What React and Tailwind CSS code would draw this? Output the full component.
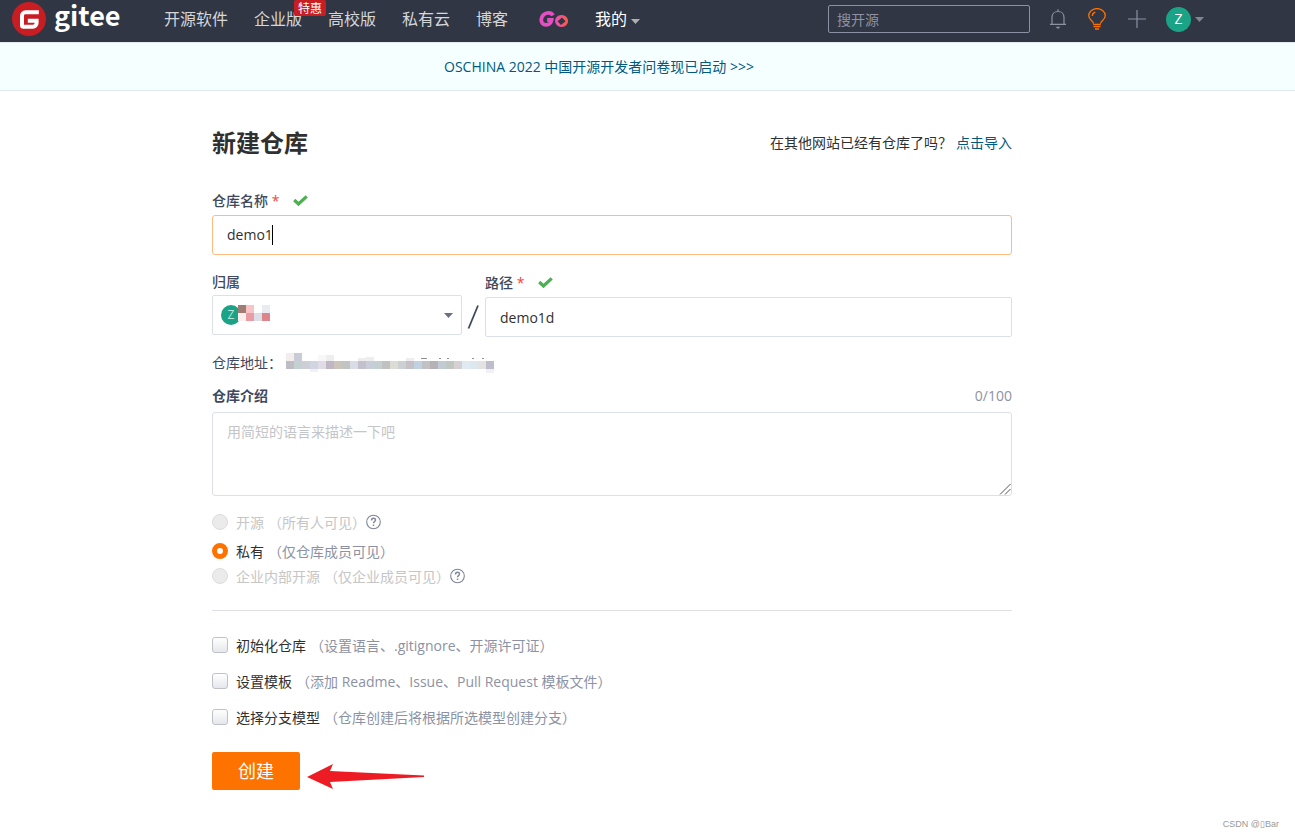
import React, { useState } from 'react';

const navItems = ['开源软件', '企业版', '高校版', '私有云', '博客'];

const ownerBlocks = [
    ['#a17c74', '#f9c4c6', '#ffffff', '#e8ecf0'],
    ['#fdeeee', '#e99ca2', '#dcdfe8', '#de858b']
];

const addressTop = [
    '#f3eded', '#c9ccd6', '#ffffff', '#ffffff', '#f8f6f8', '#eeeeef'
];

const addressMiddle = [
    '#bfbcc4', '#c5d0d1', '#ccd0d6', '#d0d5e1', '#e0dce5', '#c0b6c4', '#cbc4bb',
    '#c0c4c2', '#d9dce6', '#c2c1cc', '#c9ccd9', '#c2d0d1', '#c2c1c2', '#dcdcd4',
    '#ccd0d3', '#c4c1c7', '#c1d1e2', '#c2c1c2', '#b4b2b4', '#c2cbd3', '#c0c6c2',
    '#d5d0d1', '#e1e9f3', '#dce8ef', '#e5e2e3', '#bfbccb'
];

const visibilities = [
    { value: 'public', label: '开源', hint: '（所有人可见）', disabled: true, help: true },
    { value: 'private', label: '私有', hint: '（仅仓库成员可见）', disabled: false, help: false },
    { value: 'inner', label: '企业内部开源', hint: '（仅企业成员可见）', disabled: true, help: true }
];

const options = [
    { id: 'init', label: '初始化仓库', hint: '（设置语言、.gitignore、开源许可证）' },
    { id: 'template', label: '设置模板', hint: '（添加 Readme、Issue、Pull Request 模板文件）' },
    { id: 'branch', label: '选择分支模型', hint: '（仓库创建后将根据所选模型创建分支）' }
];

const Caret = ({ className }) => (
    <svg className={`h-[5px] w-[9px] shrink-0 ${className}`} viewBox="0 0 9 5" fill="currentColor">
        <path d="M0 0h9L4.5 5z" />
    </svg>
);

const CheckMark = () => (
    <svg className="h-[11px] w-[15px]" viewBox="0 0 15 11" fill="none" stroke="#4caf50" strokeWidth="3.2">
        <path d="M1.2 5l4.3 4L13.7 1.3" />
    </svg>
);

const HelpIcon = () => (
    <svg className="h-4 w-4" viewBox="0 0 16 16" fill="none" stroke="#7f869b" strokeWidth="1.1">
        <circle cx="7.500" cy="8" r="6.8" />
        <path d="M5.500 6.400C5.500 4.900 6.300 4.200 7.500 4.200s2 .8 2 1.900c0 1.500-2 1.600-2 3.200" strokeWidth="1.4" />
        <path d="M7.500 10.600v1.400" strokeWidth="1.5" />
    </svg>
);

const Header = () => (
    <header className="flex h-[42px] items-center bg-[#303643] pb-1 pl-3">
        <a href="#home" aria-label="gitee" className="flex w-[152px] shrink-0 items-center gap-2">
            <svg className="h-[34px] w-[34px]" viewBox="0 0 34 34">
                <circle cx="17" cy="17" r="17" fill="#c71d23" />
                <path
                    d="M26.8 10.3H13.4a3.4 3.4 0 0 0-3.4 3.4v9.6c0 1 .5 1.5 1.5 1.5h9.3a3.8 3.8 0 0 0 3.8-3.8v-2.2H15.8"
                    fill="none"
                    stroke="#fff"
                    strokeWidth="4"
                />
            </svg>
            <span className="pb-2 font-['Noto_Sans_CJK_SC',sans-serif] text-[27px] leading-10 font-bold text-white">gitee</span>
        </a>

        <nav className="flex items-center gap-[26px] text-base leading-6 whitespace-nowrap text-[#d6d7da]">
            {navItems.map((item) => (
                <a key={item} href="#nav" className="relative">
                    {item}
                    {item === '企业版' && (
                        <span className="absolute -top-[7px] left-10 rounded-xs bg-[#c71d23] px-1 pt-px text-xs leading-[15px] text-white">
                            特惠
                        </span>
                    )}
                </a>
            ))}
            <a href="#go" aria-label="Go" className="pl-[5px]">
                <svg className="h-4 w-[30px]" viewBox="0 0 30 16">
                    <defs>
                        <linearGradient id="go" x1="0" x2="1">
                            <stop offset="0" stopColor="#e64fc4" />
                            <stop offset="1" stopColor="#fb5c3c" />
                        </linearGradient>
                    </defs>
                    <path
                        d="M14 4.400C13 2.600 11.400 1.900 9.400 1.900 5.400 1.900 2.400 5 2.200 8.800c0 3 1.800 5 4.800 5 3.400 0 5-1.600 5.600-4.800H8.200"
                        fill="none"
                        stroke="#e64fc4"
                        strokeWidth="3.8"
                    />
                    <path d="M22.500 4a6.500 6 0 1 0 .1 0zM23 6.600l3.600 3.600L22 14l-3.400-3.800z" fill="url(#go)" fillRule="evenodd" />
                </svg>
            </a>
            <a href="#mine" className="flex items-center gap-1 text-white">
                我的
                <Caret className="mt-1 text-[#adafb4]" />
            </a>
        </nav>

        <div className="mr-[91px] ml-auto flex items-center">
            <input
                type="search"
                aria-label="搜开源"
                placeholder="搜开源"
                className="mr-5 h-7 w-[202px] rounded-xs border border-[#8c92a4] px-2 text-sm placeholder:text-[#8c92a4]"
            />
            <button aria-label="通知" className="mr-[22px] text-[#8c92a4]">
                <svg className="h-5 w-4" viewBox="0 0 16 20" fill="none" stroke="currentColor" strokeWidth="1.2">
                    <path d="M0 15.400h16M2 15V8.500C2 4.800 4.500 2.500 8 2.500s6 2.300 6 6V15M8 .3v2" />
                    <path d="M5.500 17.800h5L8 20z" fill="currentColor" stroke="none" />
                </svg>
            </button>
            <button aria-label="建议" className="mr-[22px] text-[#fe7300]">
                <svg className="h-[22px] w-[18px]" viewBox="0 0 18 22" fill="none" stroke="currentColor" strokeWidth="1.3">
                    <path d="M5.500 15.800c0-3-4.800-4-4.800-8.200a8.300 7 0 0 1 16.600 0c0 4.200-4.800 5.200-4.800 8.200" />
                    <path d="M4.300 8c0-2 1.200-3.300 3-3.800M5.200 16.500h7.600M5.500 18.700h7M7 21h4" />
                </svg>
            </button>
            <button aria-label="新建" className="mr-5 text-[#8c92a4]">
                <svg className="h-[18px] w-[18px]" viewBox="0 0 18 18" stroke="currentColor" strokeWidth="1.2">
                    <path d="M0 9h18M9 0v18" />
                </svg>
            </button>
            <button aria-label="账号" className="flex items-center gap-1">
                <span className="flex h-[25px] w-[25px] items-center justify-center rounded-full bg-[#1aa386] text-sm text-white">
                    Z
                </span>
                <Caret className="text-[#7f8594]" />
            </button>
        </div>
    </header>
);

const App = () => {
    const [name, setName] = useState('demo1');
    const [path, setPath] = useState('demo1d');
    const [intro, setIntro] = useState('');
    const [visibility, setVisibility] = useState('private');

    return (
        <div className="bg-white font-['Open_Sans','Noto_Sans_CJK_SC',sans-serif] text-sm leading-5 text-[#40485b]">
            <Header />

            {/* Announcement */}
            <div className="flex h-[49px] items-center justify-center border-y border-[#e3e9ed] bg-[#f6ffff] pr-[97px]">
                <a href="#survey" className="text-[#005980]">
                    OSCHINA 2022 中国开源开发者问卷现已启动 &gt;&gt;&gt;
                </a>
            </div>

            <div className="pr-[71px]">
                <main className="mx-auto max-w-[800px] pt-9">
                    <div className="flex items-center justify-between">
                        <h1 className="text-2xl leading-8 font-bold text-[#303030]">新建仓库</h1>
                        <p className="text-[#303030]">
                            在其他网站已经有仓库了吗？
                            <a href="#import" className="ml-1 text-[#005980]">点击导入</a>
                        </p>
                    </div>

                    <form onSubmit={(e) => e.preventDefault()} className="pt-8">
                        {/* Name */}
                        <div className="flex items-center">
                            <label htmlFor="name" className="font-medium">
                                仓库名称 <span className="text-[#f44336]">*</span>
                            </label>
                            <span className="ml-[14px] pb-[2px]"><CheckMark /></span>
                        </div>
                        <div className="mt-1 flex h-10 items-center rounded-[3px] border border-[#ffbb7f] px-[14px]">
                            <input
                                id="name"
                                value={name}
                                onChange={(e) => setName(e.target.value)}
                                className="field-sizing-content text-[#303030] caret-transparent outline-none"
                            />
                            <span className="-ml-px h-5 w-px bg-black"></span>
                        </div>

                        {/* Owner and path */}
                        <div className="mt-4 flex items-start">
                            <div className="w-[250px]">
                                <label htmlFor="owner" className="block pt-px font-medium">归属</label>
                                <div className="relative mt-[3px] flex h-10 items-center justify-between rounded-xs border border-[#dce0e8] px-2">
                                    <div className="flex items-start">
                                        <span className="flex h-5 w-5 items-center justify-center rounded-full bg-[#1aa386] text-xs text-[#b7e3da]">
                                            Z
                                        </span>
                                        <svg className="-ml-[3px] h-4 w-8" viewBox="0 0 4 2" shapeRendering="crispEdges">
                                            {ownerBlocks.map((row, y) =>
                                                row.map((fill, x) => (
                                                    <rect key={`${x}-${y}`} x={x} y={y} width="1" height="1" fill={fill} />
                                                ))
                                            )}
                                        </svg>
                                    </div>
                                    <Caret className="text-[#6b7182]" />
                                    <select id="owner" className="absolute inset-0 appearance-none opacity-0">
                                        <option value="z">Z</option>
                                    </select>
                                </div>
                            </div>
                            <svg className="mt-[34px] h-6 w-[23px]" viewBox="0 0 23 24" stroke="#40485b" strokeWidth="1.8">
                                <path d="M6.500 23.500L16 .5" />
                            </svg>
                            <div className="flex-1 pt-[2px]">
                                <div className="flex items-center">
                                    <label htmlFor="path" className="font-medium">
                                        路径 <span className="text-[#f44336]">*</span>
                                    </label>
                                    <span className="ml-[14px] pb-[2px]"><CheckMark /></span>
                                </div>
                                <input
                                    id="path"
                                    value={path}
                                    onChange={(e) => setPath(e.target.value)}
                                    className="mt-1 block h-10 w-full rounded-xs border border-[#dce0e8] px-[14px] text-[#303030]"
                                />
                            </div>
                        </div>

                        {/* Address */}
                        <div className="mt-4 flex h-5 items-center">
                            <span>仓库地址：</span>
                            <svg className="ml-1 h-5 w-[208px]" viewBox="0 0 208 20" shapeRendering="crispEdges">
                                {addressTop.map((fill, i) => (
                                    <rect key={i} x={i * 8} y={i < 2 ? 0 : 2} width="8" height="8" fill={fill} />
                                ))}
                                <path d="M72 5h8v3h-8zM80 4h8v4h-8zM120 5h8v3h-8z" fill="#eeeef1" />
                                <path d="M135 5h6v1h-6zM153 5h2v1h-2zM161 5h2v1h-2zM186 5h2v1h-2zM196 5h2v1h-2z" fill="#8d9196" />
                                {addressMiddle.map((fill, i) => (
                                    <rect key={i} x={i * 8} y="8" width="8" height="8" fill={fill} />
                                ))}
                                <path d="M24 16h8v3h-8zM200 16h8v4h-8z" fill="#f0f0f5" />
                            </svg>
                        </div>

                        {/* Introduction */}
                        <div className="mt-[13px] flex items-center justify-between">
                            <label htmlFor="intro" className="font-bold">仓库介绍</label>
                            <span className="text-[#8c92a4]">{intro.length}/100</span>
                        </div>
                        <div className="relative mt-[6px]">
                            <textarea
                                id="intro"
                                value={intro}
                                maxLength={100}
                                onChange={(e) => setIntro(e.target.value)}
                                placeholder="用简短的语言来描述一下吧"
                                className="block h-[84px] w-full resize-none rounded-[3px] border border-[#dce0e8] px-[14px] py-[9px] placeholder:text-[#c3c5c9]"
                            />
                            <svg className="absolute right-px bottom-px h-3 w-3" viewBox="0 0 12 12" stroke="#555555">
                                <path d="M1 11.500L11.500 1M6 11.500L11.500 6" />
                            </svg>
                        </div>

                        {/* Visibility */}
                        <div className="pt-[14px]">
                            {visibilities.map((item) => (
                                <div key={item.value} className="flex h-6 items-center first:mb-[5px] last:mt-px">
                                    <input
                                        type="radio"
                                        id={item.value}
                                        name="visibility"
                                        checked={visibility === item.value}
                                        disabled={item.disabled}
                                        onChange={() => setVisibility(item.value)}
                                        className="h-4 w-4 appearance-none rounded-full border border-[#dddddd] bg-white checked:border-5 checked:border-[#fe7300] disabled:bg-[#ebebeb]"
                                    />
                                    <label
                                        htmlFor={item.value}
                                        className={`ml-2 pt-px ${item.disabled ? 'text-[#c6c6c6]' : 'text-[#303030]'}`}
                                    >
                                        {item.label}
                                        <span className={`ml-1 ${item.disabled ? '' : 'text-[#8c92a4]'}`}>{item.hint}</span>
                                    </label>
                                    {item.help && <HelpIcon />}
                                </div>
                            ))}
                        </div>

                        {/* Options */}
                        <div className="mt-[22px] flex flex-col gap-3 border-t border-[#dcdfe3] pt-[22px]">
                            {options.map((item) => (
                                <div key={item.id} className="flex h-6 items-center">
                                    <input
                                        type="checkbox"
                                        id={item.id}
                                        className="h-4 w-4 appearance-none rounded-[3px] border border-[#bfc1c6] bg-linear-to-b from-white to-[#e6e7ec] checked:bg-[#fe7300]"
                                    />
                                    <label htmlFor={item.id} className="ml-2 pt-[2px] text-[#303030]">
                                        {item.label}
                                        <span className="ml-1 text-[#8c92a4]">{item.hint}</span>
                                    </label>
                                </div>
                            ))}
                        </div>

                        {/* Submit */}
                        <div className="mt-[23px] flex items-center pb-7">
                            <button type="submit" className="h-[38px] w-[88px] rounded-xs bg-[#fe7300] text-lg text-white">
                                创建
                            </button>
                            <svg className="ml-[7px] mt-3 h-[26px] w-[118px]" viewBox="0 0 118 26" fill="#ed1c24">
                                <path d="M0 13L26 0l-3 7 94 4.500v1.500l-94 5 3 7z" />
                            </svg>
                        </div>
                    </form>
                </main>
            </div>

            <footer className="pr-4 text-right font-['Liberation_Sans',sans-serif] text-[9px] leading-3 text-[#999999]">
                CSDN @▯Bar
            </footer>
        </div>
    );
};

export default App;
